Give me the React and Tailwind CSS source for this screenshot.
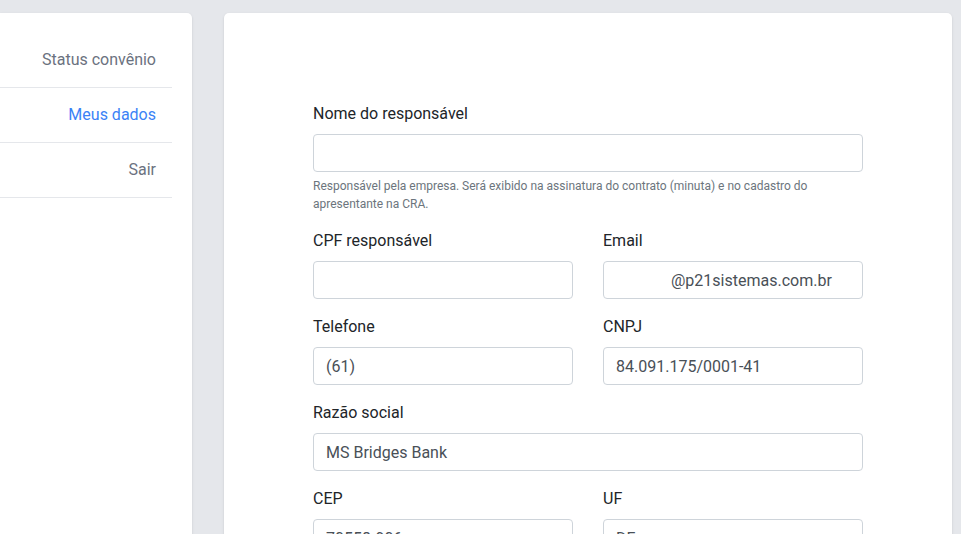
import React from 'react'

const font = { fontFamily: 'Roboto, "Liberation Sans", Arial, sans-serif' }

const menu = [
  { label: 'Status convênio', active: false },
  { label: 'Meus dados', active: true },
  { label: 'Sair', active: false },
]

function Field({ label, value = '', className = '', inputClass = '', children }) {
  return (
    <div className={`mb-4 ${className}`}>
      <label className="block text-base leading-6 text-[#212529] mb-2">{label}</label>
      <input
        readOnly
        value={value}
        className={`block w-full h-[38px] px-3 text-base text-[#495057] bg-white border border-[#ced4da] rounded-[4px] outline-none ${inputClass}`}
      />
      {children}
    </div>
  )
}

export default function App() {
  return (
    <div style={font} className="h-screen overflow-hidden bg-[#e5e7eb] flex gap-8 pt-[13px] pr-[9px]">
      {/* sidebar */}
      <aside className="w-[192px] shrink-0 bg-white rounded-r-[5px] shadow-sm pt-[20px] pr-5 self-start h-[600px]">
        <ul>
          {menu.map(item => (
            <li
              key={item.label}
              className={`h-[55px] flex items-center justify-end pr-4 border-b border-[#e5e7eb] text-base ${item.active ? 'text-[#3b82f6]' : 'text-[#6b7280]'}`}
            >
              {item.label}
            </li>
          ))}
        </ul>
      </aside>

      {/* main card */}
      <main className="flex-1 bg-white rounded-[5px] shadow-sm h-[600px] pt-[89px]">
        <form className="w-[550px] mx-auto">
          <Field label="Nome do responsável">
            <p className="mt-[5px] text-xs leading-[18px] text-[#6c757d]">
              Responsável pela empresa. Será exibido na assinatura do contrato (minuta) e no cadastro do apresentante na CRA.
            </p>
          </Field>

          <div className="grid grid-cols-2 gap-x-[30px]">
            <Field label="CPF responsável" />
            <Field label="Email" value="@p21sistemas.com.br" inputClass="!pl-[67px]" />
            <Field label="Telefone" value="(61)" />
            <Field label="CNPJ" value="84.091.175/0001-41" />
          </div>

          <Field label="Razão social" value="MS Bridges Bank" />

          <div className="grid grid-cols-2 gap-x-[30px]">
            <Field label="CEP" value="70558-906" />
            <Field label="UF" value="DF" />
          </div>
        </form>
      </main>
    </div>
  )
}
